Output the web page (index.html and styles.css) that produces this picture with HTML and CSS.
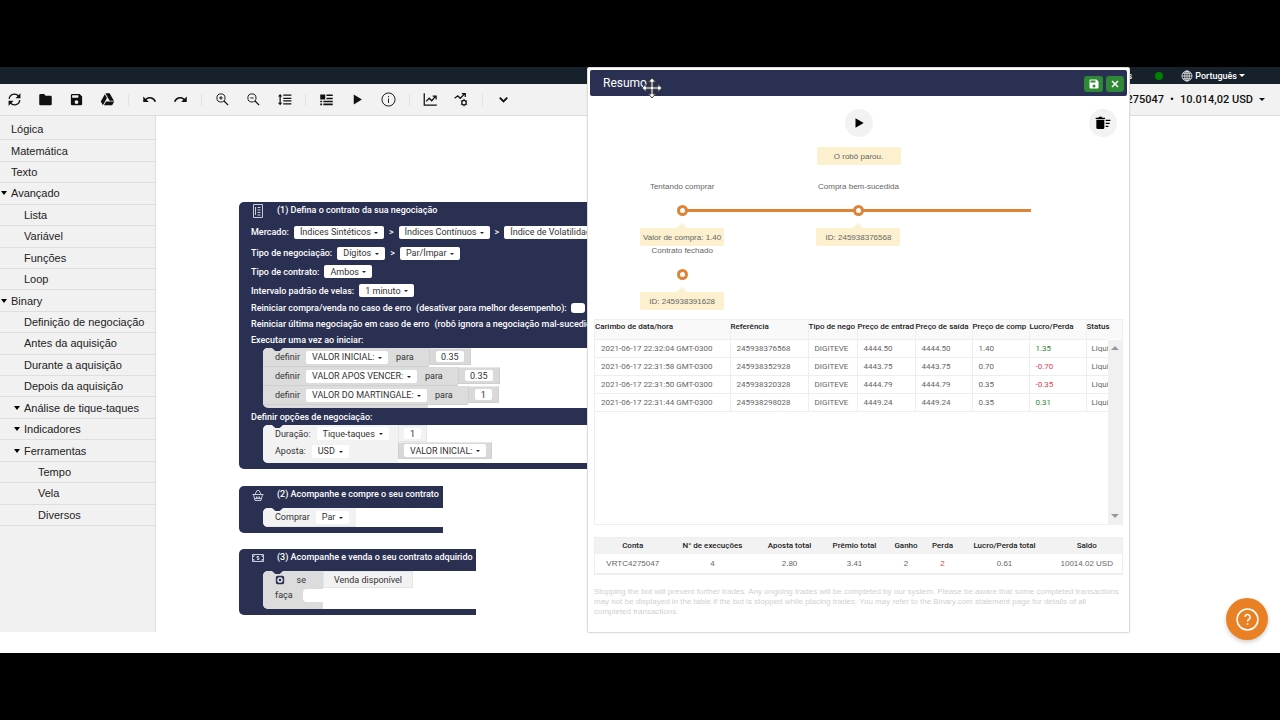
FILE: index.html
```html
<!DOCTYPE html>
<html lang="pt">
<head>
<meta charset="utf-8">
<title>Binary Bot</title>
<link rel="stylesheet" href="styles.css">
</head>
<body>
<div class="app">
  <header class="topbar">
    <a class="top-link" href="#">Accounts</a>
    <span class="online-dot"></span>
    <button class="language" type="button">
      <svg viewBox="0 0 24 24" class="globe"><circle cx="12" cy="12" r="10"/><ellipse cx="12" cy="12" rx="4.5" ry="10"/><path d="M2 12h20M4 6.500h16M4 17.500h16M12 2v20"/></svg>
      <span>Português</span><i class="caret"></i>
    </button>
  </header>

  <div class="toolbar">
    <div class="group">
      <button type="button" aria-label="Reiniciar"><svg viewBox="0 0 24 24"><path class="line" d="M3.500 11a8.500 8.500 0 0 1 15-4.500M20.500 13a8.500 8.500 0 0 1-15 4.500"/><path d="M21.500 2v8h-8zM2.500 22v-8h8z"/></svg></button>
      <button type="button" aria-label="Abrir"><svg viewBox="0 0 24 24"><path d="M10 3H4a2 2 0 0 0-2 2v14c0 1.100.9 2 2 2h16a2 2 0 0 0 2-2V8a2 2 0 0 0-2-2h-8z"/></svg></button>
      <button type="button" aria-label="Salvar"><svg viewBox="0 0 24 24"><path d="M17 3H5a2 2 0 0 0-2 2v14a2 2 0 0 0 2 2h14a2 2 0 0 0 2-2V7zm-5 16a3 3 0 1 1 0-6 3 3 0 0 1 0 6zm3-10H5V5h10z"/></svg></button>
      <button type="button" aria-label="Google Drive"><svg viewBox="0 0 24 24"><path d="M7.700 3.500 1.200 15l3.400 6 6.500-11.500zM9.700 15l-3.400 6h13.100l3.400-6zM22.300 14 15.400 2H8.600l6.800 12z"/></svg></button>
    </div>
    <div class="group">
      <button type="button" aria-label="Desfazer"><svg viewBox="0 0 24 24"><path d="M12.500 8c-2.700 0-5 1-6.900 2.600L2 7v9h9l-3.600-3.600A8 8 0 0 1 20.100 16l2.400-.8A10.500 10.500 0 0 0 12.500 8z"/></svg></button>
      <button type="button" aria-label="Refazer"><svg viewBox="0 0 24 24"><path d="M11.500 8c2.700 0 5 1 6.900 2.600L22 7v9h-9l3.600-3.600A8 8 0 0 0 3.900 16l-2.400-.8A10.500 10.500 0 0 1 11.500 8z"/></svg></button>
    </div>
    <div class="group">
      <button type="button" aria-label="Ampliar"><svg viewBox="0 0 24 24"><path class="line thin" d="M9.500 3a6.500 6.500 0 1 1 0 13 6.500 6.500 0 0 1 0-13zM9.500 6.500v6M6.500 9.500h6"/><path class="line" d="m14.500 14.500 6.500 6.500"/></svg></button>
      <button type="button" aria-label="Reduzir"><svg viewBox="0 0 24 24"><path class="line thin" d="M9.500 3a6.500 6.500 0 1 1 0 13 6.500 6.500 0 0 1 0-13zM7 9.500h5"/><path class="line" d="m14.500 14.500 6.500 6.500"/></svg></button>
      <button type="button" aria-label="Organizar"><svg viewBox="0 0 24 24"><path d="M6 7h2.500L5 3 1.500 7H4v10H1.500L5 21l3.500-4H6zM10 4v2h13V4zM10 9v2h13V9zM10 13v2h13v-2zM10 18v2h13v-2z"/></svg></button>
    </div>
    <div class="group">
      <button type="button" aria-label="Resumo"><svg viewBox="0 0 24 24"><path d="M2 4h8v8H2zM12 4h10v2.500H12zM12 9h10v2.500H12zM2 14h3v2.500H2zM7 14h15v2.500H7zM2 18.500h3V21H2zM7 18.500h15V21H7z"/></svg></button>
      <button type="button" aria-label="Executar"><svg viewBox="0 0 24 24"><path d="M6 4v16l13-8z"/></svg></button>
      <button type="button" aria-label="Informações"><svg viewBox="0 0 24 24"><path class="line thin" d="M12 1.500a10.500 10.500 0 1 1 0 21 10.500 10.500 0 0 1 0-21zM12 10.500V17.500M12 6.500v2"/></svg></button>
    </div>
    <div class="group">
      <button type="button" aria-label="Gráfico"><svg viewBox="0 0 24 24"><path class="line" d="M2 2v19h20M5 15l5-5 4 4 6-7M15.500 6.500H21V12"/></svg></button>
      <button type="button" aria-label="Trading view"><svg viewBox="0 0 24 24"><path class="line" d="m1 10 5-4 4 4 7-7M12.500 2.500H18V8"/><circle class="line" cx="16" cy="17" r="3.500"/><path class="line thin" d="M16 11v2M16 21v2M11 14l2 1M19 19l2 1M11 20l2-1M19 15l2-1"/></svg></button>
    </div>
    <div class="group">
      <button type="button" aria-label="Mais"><svg viewBox="0 0 24 24"><path class="line bold" d="m6 9 6 6 6-6"/></svg></button>
    </div>
    <button class="account" type="button"><span>VRTC4275047</span><span>•</span><span>10.014,02 USD</span><i class="caret"></i></button>
  </div>

  <main class="stage">
    <nav class="toolbox">
      <ul>
        <li class="l0"><a href="#">Lógica</a></li>
        <li class="l0"><a href="#">Matemática</a></li>
        <li class="l0"><a href="#">Texto</a></li>
        <li class="l0 open"><a href="#">Avançado</a></li>
        <li class="l1"><a href="#">Lista</a></li>
        <li class="l1"><a href="#">Variável</a></li>
        <li class="l1"><a href="#">Funções</a></li>
        <li class="l1"><a href="#">Loop</a></li>
        <li class="l0 open"><a href="#">Binary</a></li>
        <li class="l1"><a href="#">Definição de negociação</a></li>
        <li class="l1"><a href="#">Antes da aquisição</a></li>
        <li class="l1"><a href="#">Durante a aquisição</a></li>
        <li class="l1"><a href="#">Depois da aquisição</a></li>
        <li class="l1 open"><a href="#">Análise de tique-taques</a></li>
        <li class="l1 open"><a href="#">Indicadores</a></li>
        <li class="l1 open"><a href="#">Ferramentas</a></li>
        <li class="l2"><a href="#">Tempo</a></li>
        <li class="l2"><a href="#">Vela</a></li>
        <li class="l2"><a href="#">Diversos</a></li>
      </ul>
    </nav>

    <div class="canvas">
      <section class="block trade">
        <h2 class="block-title"><svg viewBox="0 0 12 14"><path d="M1.500.5h9v13h-9zM3.500 3v8M5.500 3.500h3M5.500 6h3M5.500 8.500h3M5.500 11h3"/></svg>(1) Defina o contrato da sua negociação</h2>
        <div class="row market">
          <span>Mercado:</span>
          <span class="pick"><select aria-label="Mercado"><option>Índices Sintéticos</option></select></span>
          <span>&gt;</span>
          <span class="pick"><select aria-label="Submercado"><option>Índices Contínuos</option></select></span>
          <span>&gt;</span>
          <span class="pick"><select aria-label="Ativo"><option>Índice de Volatilidade 100</option></select></span>
        </div>
        <div class="row tight">
          <span>Tipo de negociação:</span>
          <span class="pick"><select aria-label="Tipo de negociação"><option>Dígitos</option></select></span>
          <span>&gt;</span>
          <span class="pick"><select aria-label="Subtipo"><option>Par/Ímpar</option></select></span>
        </div>
        <div class="row contract">
          <span>Tipo de contrato:</span>
          <span class="pick"><select aria-label="Tipo de contrato"><option>Ambos</option></select></span>
        </div>
        <div class="row">
          <span>Intervalo padrão de velas:</span>
          <span class="pick"><select aria-label="Intervalo padrão de velas"><option>1 minuto</option></select></span>
        </div>
        <div class="row">
          <label class="check">Reiniciar compra/venda no caso de erro <span>(desativar para melhor desempenho):</span><input type="checkbox"></label>
        </div>
        <div class="row tight">
          <label class="check">Reiniciar última negociação em caso de erro <span>(robô ignora a negociação mal-sucedida):</span><input type="checkbox"></label>
        </div>
        <div class="row tight">Executar uma vez ao iniciar:</div>
        <div class="slot defines">
          <div class="define">
            <div class="stmt notch"><span>definir</span><span class="pick"><select aria-label="Variável 1"><option>VALOR INICIAL:</option></select></span><span>para</span></div>
            <div class="value"><input type="text" value="0.35" aria-label="Valor inicial"></div>
          </div>
          <div class="define">
            <div class="stmt"><span>definir</span><span class="pick"><select aria-label="Variável 2"><option>VALOR APOS VENCER:</option></select></span><span>para</span></div>
            <div class="value"><input type="text" value="0.35" aria-label="Valor após vencer"></div>
          </div>
          <div class="define">
            <div class="stmt"><span>definir</span><span class="pick"><select aria-label="Variável 3"><option>VALOR DO MARTINGALE:</option></select></span><span>para</span></div>
            <div class="value"><input class="short" type="text" value="1" aria-label="Valor do martingale"></div>
          </div>
        </div>
        <div class="row">Definir opções de negociação:</div>
        <div class="slot">
          <div class="options notch">
            <div class="stmt light"><span>Duração:</span><span class="pick"><select aria-label="Duração"><option>Tique-taques</option></select></span></div>
            <div class="value light"><input class="short" type="text" value="1" aria-label="Duração em tique-taques"></div>
            <div class="stmt light last"><span>Aposta:</span><span class="pick"><select aria-label="Moeda"><option>USD</option></select></span></div>
            <div class="value"><span class="pick"><select aria-label="Aposta"><option>VALOR INICIAL:</option></select></span></div>
          </div>
        </div>
      </section>

      <section class="block purchase">
        <h2 class="block-title"><svg viewBox="0 0 12 14"><path d="M.5 6.500h11M1.500 6.500 3 12.500h6l1.500-6M3 6.500l2-4h2l2 4M4.500 8.500v2M6 8.500v2M7.500 8.500v2M2 10.500h8"/></svg>(2) Acompanhe e compre o seu contrato</h2>
        <div class="slot">
          <div class="stmt light notch"><span>Comprar</span><span class="pick"><select aria-label="Comprar"><option>Par</option></select></span></div>
        </div>
      </section>

      <section class="block sell">
        <h2 class="block-title"><svg viewBox="0 0 12 14"><path d="M.5 3.500h11v7H.5zM.5 5.500h1.500v-2M10 3.500v2h1.500M.5 8.500H2v2M10 10.500v-2h1.500M7 5.500H5V7h2v1.500H5"/></svg>(3) Acompanhe e venda o seu contrato adquirido</h2>
        <div class="slot">
          <div class="condition notch">
            <div class="if"><svg viewBox="0 0 12 12"><rect x="1" y="1" width="10" height="10" rx="2"/><circle cx="6" cy="6" r="2.500"/></svg><span>se</span></div>
            <div class="then"><span>faça</span><i></i></div>
          </div>
          <div class="value light sale">Venda disponível</div>
        </div>
      </section>
    </div>
  </main>

  <button class="help" type="button" aria-label="Ajuda"><svg viewBox="0 0 24 24"><circle cx="12" cy="12" r="10"/><path d="M9.500 9.500a2.500 2.500 0 1 1 3.800 2.300c-.9.600-1.300 1-1.300 2.200M12 15.500V17"/></svg></button>

  <section class="dialog" role="dialog" aria-labelledby="dialog-title">
    <header class="dialog-head">
      <h1 id="dialog-title">Resumo</h1>
      <button type="button" aria-label="Salvar"><svg viewBox="0 0 24 24"><path d="M17 3H5a2 2 0 0 0-2 2v14a2 2 0 0 0 2 2h14a2 2 0 0 0 2-2V7zm-5 16a3 3 0 1 1 0-6 3 3 0 0 1 0 6zm3-10H5V5h10z"/></svg></button>
      <button type="button" aria-label="Fechar"><svg viewBox="0 0 24 24"><path class="line bold" d="m6 6 12 12M18 6 6 18"/></svg></button>
    </header>
    <svg class="cursor" viewBox="0 0 20 20"><path d="M10 0 6.500 4H9v5H4V6.500L0 10l4 3.500V11h5v5H6.500l3.500 4 3.500-4H11v-5h5v2.500l4-3.500-4-3.500V9h-5V4h2.500z"/></svg>
    <div class="dialog-body">
      <div class="controls">
        <button class="round" type="button" aria-label="Executar"><svg viewBox="0 0 24 24"><path d="M6 4v16l14-8z"/></svg></button>
        <button class="round clear" type="button" aria-label="Limpar"><svg viewBox="0 0 24 24"><path d="M1 4h4l1-1.500h4L11 4h4v2H1zM2 7h12v12a2 2 0 0 1-2 2H4a2 2 0 0 1-2-2zM16 7h7v2h-7zM16 11.500h6v2h-6zM16 16h4v2h-4z"/></svg></button>
      </div>
      <p class="pill status">O robô parou.</p>
      <ol class="steps">
        <li class="linked"><span>Tentando comprar</span><i></i><b class="pill">Valor de compra: 1.40</b></li>
        <li class="linked"><span>Compra bem-sucedida</span><i></i><b class="pill">ID: 245938376568</b></li>
        <li class="wrap"><span>Contrato fechado</span><i></i><b class="pill">ID: 245938391628</b></li>
      </ol>
      <div class="trades">
        <table>
          <colgroup><col class="c-time"><col class="c-ref"><col class="c-type"><col class="c-entry"><col class="c-price"><col class="c-price"><col class="c-price"><col></colgroup>
          <thead><tr><th>Carimbo de data/hora</th><th>Referência</th><th>Tipo de nego</th><th>Preço de entrad</th><th>Preço de saída</th><th>Preço de comp</th><th>Lucro/Perda</th><th>Status</th></tr></thead>
          <tbody>
            <tr><td>2021-06-17 22:32:04 GMT-0300</td><td>245938376568</td><td>DIGITEVE</td><td>4444.50</td><td>4444.50</td><td>1.40</td><td class="win">1.35</td><td>Liqui</td></tr>
            <tr><td>2021-06-17 22:31:58 GMT-0300</td><td>245938352928</td><td>DIGITEVE</td><td>4443.75</td><td>4443.75</td><td>0.70</td><td class="loss">-0.70</td><td>Liqui</td></tr>
            <tr><td>2021-06-17 22:31:50 GMT-0300</td><td>245938320328</td><td>DIGITEVE</td><td>4444.79</td><td>4444.79</td><td>0.35</td><td class="loss">-0.35</td><td>Liqui</td></tr>
            <tr><td>2021-06-17 22:31:44 GMT-0300</td><td>245938298028</td><td>DIGITEVE</td><td>4449.24</td><td>4449.24</td><td>0.35</td><td class="win">0.31</td><td>Liqui</td></tr>
          </tbody>
        </table>
        <div class="scrollbar"><i class="up"></i><i class="down"></i></div>
      </div>
      <table class="totals">
        <colgroup><col class="t-76"><col class="t-84"><col class="t-70"><col class="t-60"><col class="t-43"><col class="t-30"><col class="t-94"><col></colgroup>
        <thead><tr><th>Conta</th><th>N° de execuções</th><th>Aposta total</th><th>Prêmio total</th><th>Ganho</th><th>Perda</th><th>Lucro/Perda total</th><th>Saldo</th></tr></thead>
        <tbody><tr><td>VRTC4275047</td><td>4</td><td>2.80</td><td>3.41</td><td>2</td><td class="loss">2</td><td>0.61</td><td>10014.02 USD</td></tr></tbody>
      </table>
      <p class="notice">Stopping the bot will prevent further trades. Any ongoing trades will be completed by our system. Please be aware that some completed transactions may not be displayed in the table if the bot is stopped while placing trades. You may refer to the Binary.com statement page for details of all completed transactions.</p>
    </div>
  </section>
</div>
</body>
</html>
```
FILE: styles.css
```css
* { box-sizing: border-box; margin: 0; padding: 0; }
body { background: #000; padding: 67px 0; height: 100vh; font-family: Roboto, Arial, sans-serif; color: #222; overflow: hidden; }
button, input, select { font: inherit; color: inherit; border: 0; background: none; }
a { color: inherit; text-decoration: none; }
svg { display: block; fill: currentColor; }
.line { fill: none; stroke: currentColor; stroke-width: 2; }
.thin { stroke-width: 1.500; }
.bold { stroke-width: 3; }

.app { position: relative; height: 100%; background: #fff; display: flex; flex-direction: column; }
.caret { display: inline-block; border: 3px solid transparent; border-top-color: currentColor; border-bottom: 0; }

.topbar { height: 17px; flex: none; background: #17212b; color: #fff; display: flex; align-items: center; justify-content: flex-end; padding-right: 35px; font-size: 9px; font-weight: 500; }
.online-dot { width: 8px; height: 8px; border-radius: 50%; background: #008000; margin: 0 18px 0 23px; }
.language { display: flex; align-items: center; gap: 2px; }
.globe { width: 12px; height: 12px; fill: none; stroke: currentColor; stroke-width: 1.500; }

.toolbar { height: 32px; flex: none; background: #f2f2f2; border-bottom: 1px solid #dcdcdc; display: flex; align-items: center; color: #111; }
.group { display: flex; gap: 14px; padding: 0 12px; height: 12px; align-items: center; border-left: 1px solid #e2e2e2; }
.group:first-child { border: 0; padding-left: 6px; }
.group button { width: 17px; }
.group svg { width: 17px; height: 15px; }
.account { margin-left: auto; padding-right: 15px; display: flex; align-items: center; gap: 6px; font-size: 11px; font-weight: 500; }

.stage { flex: 1; display: flex; min-height: 0; padding-bottom: 21px; }
.toolbox { width: 156px; flex: none; background: #f1f1f1; border-right: 1px solid #ddd; padding-top: 3px; font-family: "Liberation Sans", Arial, sans-serif; font-size: 12px; }
.toolbox { font-size: 11px; }
.toolbox ul { list-style: none; height: 407px; display: grid; grid-auto-rows: 1fr; }
.toolbox li { display: flex; align-items: center; border-bottom: 1px solid #dedede; white-space: nowrap; position: relative; }
.l0 { padding-left: 11px; }
.l1 { padding-left: 24px; }
.l2 { padding-left: 38px; }
.open::before { content: ""; width: 0; border: 3px solid transparent; border-top: 4px solid #000; border-bottom: 0; margin: 0 4px 0 -10px; }

.canvas { flex: 1; position: relative; overflow: hidden; min-width: 0; }
.block { position: absolute; left: 83px; background: #2a3052; color: #fff; border-radius: 5px 0 0 5px; font-size: 9px; font-weight: 500; padding-bottom: 6px; white-space: nowrap; }
.trade { top: 86px; width: 420px; }
.purchase { top: 370px; width: 204px; }
.sell { top: 433px; width: 237px; }
.block-title { height: 17px; padding-bottom: 2px; font: inherit; display: flex; align-items: center; gap: 13px; padding-left: 13px; }
.block-title svg { width: 12px; height: 14px; flex: none; margin-top: 3px; fill: none; stroke: #c9cbd8; stroke-width: 1; }
.purchase .block-title, .sell .block-title { margin-bottom: 5px; }
.row { height: 17px; display: flex; align-items: center; gap: 5px; padding-left: 12px; }
.tight { height: 16px; }
.market { height: 26px; }
.contract { height: 21px; }
.pick { position: relative; display: inline-flex; height: 13px; background: #fff; color: #333; border-radius: 2px; font-weight: 400; }
.pick select { appearance: none; padding: 0 13px 0 6px; }
.pick::after { content: ""; position: absolute; right: 6px; top: 6px; border: 2px solid transparent; border-top: 2px solid #222; border-bottom: 0; pointer-events: none; }
.check { display: flex; align-items: center; gap: 4px; }
.check span { margin-left: 1px; }
.check input { appearance: none; width: 14px; height: 10px; background: #fff; border-radius: 3px; }

.slot { margin-left: 24px; background: #fff; border-radius: 5px 0 0 5px; overflow: hidden; display: flex; flex-direction: column; color: #333; font-weight: 400; }
.defines { padding-bottom: 3px; background: linear-gradient(90deg, #dcdcdc 165px, #fff 165px); }
.define { display: flex; height: 19px; align-items: flex-start; background: #fff; }
.stmt { height: 19px; background: #dcdcdc; display: flex; align-items: center; gap: 6px; padding: 0 15px 0 12px; border-bottom: 1px solid #cfcfcf; }
.stmt > .pick + span { margin-left: 2px; }
.value { height: 17px; background: #d9d9d9; display: flex; align-items: center; padding: 0 6px; border: 1px solid #cfcfcf; border-top-color: #e8e8e8; }
.value input { width: 28px; height: 11px; background: #fff; border-radius: 2px; text-align: center; }
.value .short { width: 17px; }
.light { background: #f2f2f2; border-color: #e6e6e6; }
.options { display: grid; grid-template-columns: 135px max-content; grid-template-rows: 17px 21px; justify-items: start; }
.options .stmt { width: 100%; height: 100%; border: 0; }
.options .last { padding-bottom: 3px; }
.options .value { padding: 0 5px; }
.notch { position: relative; }
.notch::before { content: ""; position: absolute; left: 9px; top: 0; width: 11px; height: 3px; background: #2a3052; clip-path: polygon(0 0, 100% 0, 70% 100%, 30% 100%); }
.purchase .stmt { height: 19px; width: 93px; }
.sell .slot { flex-direction: row; height: 38px; }
.condition { width: 60px; background: #dcdcdc; border-radius: 0 0 0 5px; }
.if, .then { height: 17px; display: flex; align-items: center; padding-left: 12px; justify-content: space-between; }
.if { padding-right: 17px; }
.if svg { width: 10px; height: 10px; fill: #2a3052; }
.if circle { fill: none; stroke: #fff; stroke-width: 1.500; }
.then { height: 14px; }
.then i { width: 20px; height: 13px; background: #fff; border-radius: 4px 0 0 4px; }
.sale { padding: 0 10px; }

.help { position: absolute; right: 12px; bottom: 13px; width: 42px; height: 42px; border-radius: 50%; background: #e98024; color: #fff; display: grid; place-items: center; box-shadow: 0 2px 4px rgba(0, 0, 0, .2); }
.help svg { width: 25px; height: 25px; fill: none; stroke: currentColor; stroke-width: 1.500; }

.dialog { position: absolute; left: 587px; top: 0; width: 543px; background: #fff; border: 1px solid #dcdcdc; border-radius: 2px; padding: 2px; box-shadow: 0 0 2px rgba(0, 0, 0, .1); font-family: "Liberation Sans", Arial, sans-serif; font-size: 8px; color: #666; }
.dialog-head { height: 26px; background: #2a3052; border-radius: 2px; color: #fff; display: flex; align-items: center; gap: 3px; padding: 2px 3px 0 13px; }
.dialog-head h1 { font: 12px/14px Roboto, sans-serif; padding-bottom: 2px; margin-right: auto; }
.dialog-head button { width: 19px; height: 16px; background: #2e8836; border-radius: 3px; display: grid; place-items: center; }
.dialog-head button + button { width: 18px; }
.dialog-head svg { width: 12px; height: 12px; }
.cursor { position: absolute; left: 54px; top: 10px; width: 20px; height: 20px; fill: #fff; stroke: #444; stroke-width: 1; }
.dialog-body { padding: 13px 4px 13px; }
.controls { display: grid; grid-template-columns: 1fr auto 1fr; }
.round { width: 28px; height: 28px; border-radius: 50%; background: #f2f2f2; color: #000; display: grid; place-items: center; grid-column: 2; }
.round svg { width: 14px; height: 14px; }
.clear { grid-column: 3; justify-self: end; margin-right: 6px; }
.clear svg { width: 16px; height: 16px; }
.pill { display: block; width: 84px; height: 18px; line-height: 19px; margin: 0 auto; text-align: center; background: #fcf0cf; border-radius: 2px; font-weight: 400; position: relative; white-space: nowrap; }
.status { margin-top: 10px; }
.steps { list-style: none; display: grid; grid-template-columns: repeat(3, 1fr); grid-auto-rows: 64px; margin-top: 17px; }
.steps li { position: relative; text-align: center; line-height: 9px; }
.steps span { display: block; height: 23px; }
.steps i { display: block; width: 11px; height: 11px; margin: 0 auto 12px; border: 3px solid #de8434; border-radius: 50%; background: #fff; position: relative; }
.linked::before { content: ""; position: absolute; left: 50%; width: 98%; top: 27px; height: 3px; background: #de8434; }
.steps .pill::before { content: ""; position: absolute; left: 37px; top: -5px; border: 5px solid transparent; border-top: 0; border-bottom-color: #fcf0cf; }
.wrap { grid-column: 1; }

table { border-collapse: collapse; table-layout: fixed; width: 100%; }
th, td { white-space: nowrap; font-weight: 400; text-align: left; }
th { color: #222; font-family: Roboto, sans-serif; font-weight: 500; }
.trades { display: flex; height: 206px; margin-top: 9px; border: 1px solid #eee; align-items: flex-start; background: linear-gradient(#f9f9f9 19px, #fff 19px); }
.trades table { flex: 1; width: 0; font-family: Roboto, sans-serif; }
.trades th { height: 19px; border-bottom: 1px solid #eee; border-right: 1px solid #f0f0f0; vertical-align: top; line-height: 13px; }
.trades td { height: 18px; padding-left: 6px; border-bottom: 1px solid #eee; border-right: 1px solid #eee; }
.trades th:last-child, .trades td:last-child { border-right: 0; }
.trades td:last-child { padding-left: 5px; }
.c-time { width: 135px; }
.c-ref { width: 78px; }
.c-type { width: 49px; }
.c-entry { width: 58px; }
.c-price { width: 57px; }
.scrollbar { width: 14px; margin-top: 20px; height: 184px; background: #f0f0f0; display: flex; flex-direction: column; justify-content: space-between; align-items: center; padding: 6px 0; }
.scrollbar i { border: 4px solid transparent; }
.up { border-top: 0 !important; border-bottom-color: #999 !important; }
.down { border-bottom: 0 !important; border-top-color: #999 !important; }
.win { color: #2e8836; }
.loss { color: #e04050; }
.totals { margin-top: 12px; border: 1px solid #eee; }
.totals th, .totals td { text-align: center; height: 16px; }
.totals th { background: #f2f2f2; }
.totals td { height: 20px; border-bottom: 2px solid #eee; }
.t-76 { width: 76px; }
.t-84 { width: 84px; }
.t-70 { width: 70px; }
.t-60 { width: 60px; }
.t-43 { width: 43px; }
.t-30 { width: 30px; }
.t-94 { width: 94px; }
.notice { margin-top: 12px; line-height: 10px; color: #d0d0d0; }
```
